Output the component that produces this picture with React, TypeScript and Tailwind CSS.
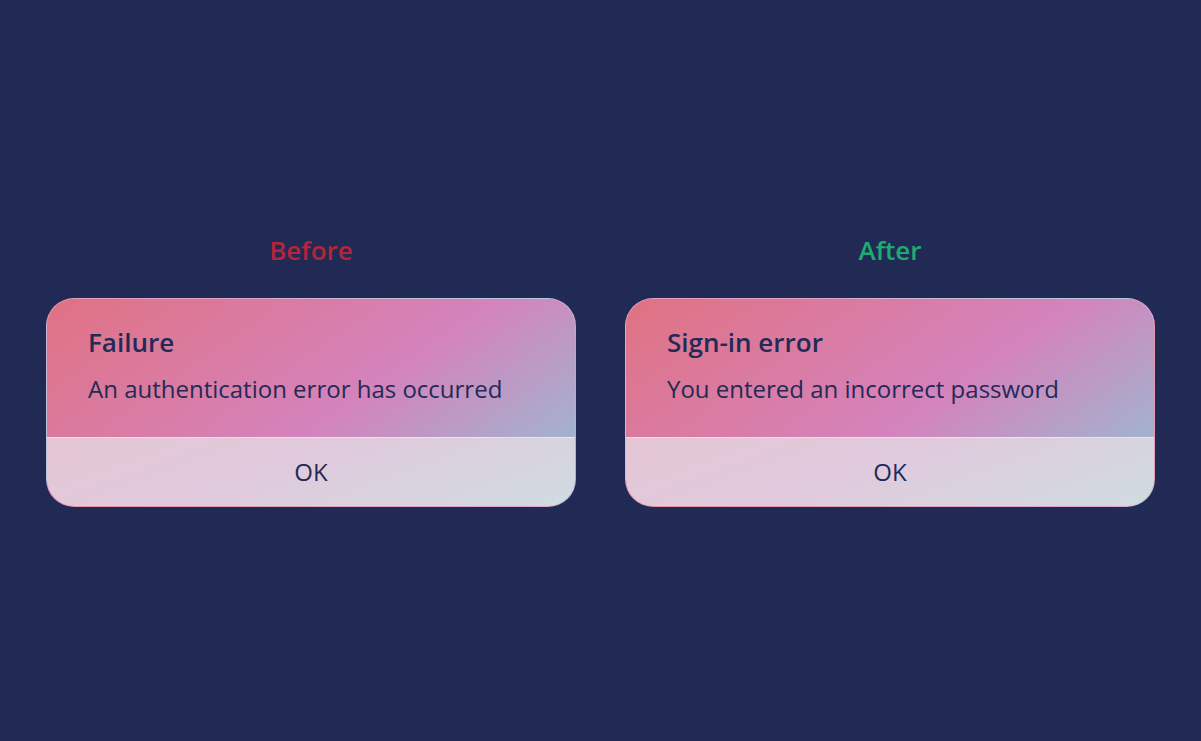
type DialogProps = {
  label: string;
  labelColor: string;
  title: string;
  message: string;
};

const dialogs: DialogProps[] = [
  {
    label: "Before",
    labelColor: "text-[#b3263a]",
    title: "Failure",
    message: "An authentication error has occurred",
  },
  {
    label: "After",
    labelColor: "text-[#1faa72]",
    title: "Sign-in error",
    message: "You entered an incorrect password",
  },
];

function Dialog({ label, labelColor, title, message }: DialogProps) {
  return (
    <div className="flex flex-col items-center">
      <h2 className={`text-[26px] font-semibold leading-8 mb-[32px] ${labelColor}`}>{label}</h2>
      <div className="w-[530px] h-[209px] rounded-[28px] overflow-hidden border border-white/25 bg-[linear-gradient(145deg,#e07282_0%,#d483bd_55%,#a2b3cd_88%)] flex flex-col">
        <div className="h-[138px] px-[41px] pt-[25px]">
          <h3 className="text-[26px] font-semibold text-[#232a56] leading-9">{title}</h3>
          <p className="text-[24px] text-[#232a56] leading-8 mt-[13px]">{message}</p>
        </div>
        <button className="flex-1 bg-[linear-gradient(160deg,#e4c6d4_0%,#e0cadd_45%,#cfdce0_100%)] border-t border-white/40 text-[24px] text-[#232a56]">
          OK
        </button>
      </div>
    </div>
  );
}

export default function App() {
  return (
    <div
      className="min-h-screen bg-[#202a55] flex items-center justify-center gap-[49px]"
      style={{ fontFamily: "'Open Sans', 'Noto Sans', sans-serif" }}
    >
      {dialogs.map((d, i) => (
        <Dialog key={i} {...d} />
      ))}
    </div>
  );
}
